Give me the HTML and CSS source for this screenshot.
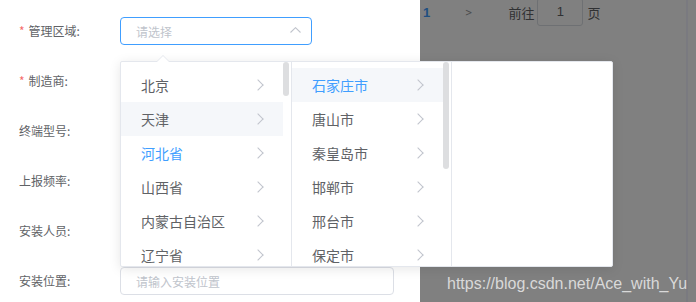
FILE: index.html
```html
<!DOCTYPE html>
<html lang="zh-CN">
<head>
  <meta charset="UTF-8" />
  <meta name="viewport" content="width=device-width, initial-scale=1.0">
  <title>终端信息</title>
  <link rel="stylesheet" href="styles.css">
</head>
<body>

  <div class="page">
    <div class="drawer">
      <div class="form">
        <div class="form-item">
          <label class="label"><span class="req">*</span>管理区域:</label>
          <div class="input is-focus">
            <span class="placeholder">请选择</span>
            <svg class="caret" width="11" height="6" viewBox="0 0 11 6">
              <polyline points="0.5,5.5 5.5,0.7 10.5,5.5" fill="none" stroke="#c0c4cc" stroke-width="1.1" />
            </svg>
          </div>
        </div>
        <div class="form-item">
          <label class="label"><span class="req">*</span>制造商:</label>
          <div class="input"></div>
        </div>
        <div class="form-item">
          <label class="label">终端型号:</label>
          <div class="input"></div>
        </div>
        <div class="form-item">
          <label class="label">上报频率:</label>
          <div class="input"></div>
        </div>
        <div class="form-item">
          <label class="label">安装人员:</label>
          <div class="input"></div>
        </div>
        <div class="form-item">
          <label class="label">安装位置:</label>
          <div class="input wide"><span class="placeholder">请输入安装位置</span></div>
        </div>
      </div>
    </div>

    <div class="mask">
      <div class="pager">
        <span class="pager-num">1</span>
        <span class="pager-next">&gt;</span>
        <span class="jump">前往</span>
        <span class="jump-box">1</span>
        <span class="jump">页</span>
      </div>
      <div class="mask-bar"></div>
    </div>
  </div>

  <!-- cascader popper, sits on top of drawer and mask -->
  <div class="cascader">
    <div class="arrow"></div>
    <div class="menu first">
      <ul class="list">
        <li class="node">北京<i class="chev"></i></li>
        <li class="node hover">天津<i class="chev"></i></li>
        <li class="node active">河北省<i class="chev"></i></li>
        <li class="node">山西省<i class="chev"></i></li>
        <li class="node">内蒙古自治区<i class="chev"></i></li>
        <li class="node">辽宁省<i class="chev"></i></li>
      </ul>
      <div class="thumb short"></div>
    </div>
    <div class="menu second">
      <ul class="list">
        <li class="node hover active">石家庄市<i class="chev"></i></li>
        <li class="node">唐山市<i class="chev"></i></li>
        <li class="node">秦皇岛市<i class="chev"></i></li>
        <li class="node">邯郸市<i class="chev"></i></li>
        <li class="node">邢台市<i class="chev"></i></li>
        <li class="node">保定市<i class="chev"></i></li>
      </ul>
      <div class="thumb long"></div>
    </div>
    <div class="menu third"></div>
  </div>

  <div class="watermark">https://blog.csdn.net/Ace_with_Yu</div>

</body>
</html>
```

FILE: styles.css
```css
body {
  margin: 0;
  padding: 0;
  width: 696px;
  height: 302px;
  overflow: hidden;
  position: relative;
  font-family: "Noto Sans CJK SC", "Noto Sans", sans-serif;
  color: #606266;
}

.page {
  display: flex;
  height: 302px;
}

.drawer {
  width: 420px;
  background-color: #fff;
}

.form {
  padding: 17px 0 0 19px;
}

.form-item {
  display: flex;
  align-items: center;
  height: 28px;
  margin-bottom: 22px;
}

.label {
  width: 101px;
  font-size: 12px;
  color: #606266;
  line-height: 28px;
}

.req {
  color: #f56c6c;
  margin-right: 4px;
}

.input {
  box-sizing: border-box;
  width: 192px;
  height: 28px;
  border: 1px solid #dcdfe6;
  border-radius: 4px;
  padding: 0 10px 0 15px;
  display: flex;
  align-items: center;
  justify-content: space-between;
}

.input.is-focus {
  border-color: #409eff;
}

.input.wide {
  width: 274px;
}

.placeholder {
  font-size: 12px;
  color: #c0c4cc;
}

.caret {
  margin-top: -2px;
}

.mask {
  flex: 1;
  display: flex;
  background-color: #808080;
}

.pager {
  flex: 1;
  display: flex;
  align-items: center;
  height: 28px;
  margin-top: -2px;
  padding-left: 3px;
  font-size: 13px;
  color: #303133;
}

.pager-num {
  font-family: "Liberation Sans", Arial, sans-serif;
  font-weight: bold;
  color: #204f80;
}

.pager-next {
  margin-left: 34px;
  font-family: "DejaVu Sans", sans-serif;
  font-size: 11px;
  color: #4a4b4d;
  transform: scaleX(0.8);
}

.jump {
  margin-left: 35px;
}

.jump-box {
  box-sizing: border-box;
  width: 46px;
  height: 28px;
  margin: 0 4px 0 3px;
  border: 1px solid #6e7073;
  border-radius: 3px;
  text-align: center;
  line-height: 26px;
  font-family: "Liberation Sans", Arial, sans-serif;
}

.jump-box + .jump {
  margin-left: 0;
}

.mask-bar {
  width: 2px;
  margin-right: 8px;
  background-color: #7a7a80;
}

.cascader {
  position: absolute;
  left: 120px;
  top: 61px;
  display: flex;
  background-color: #fff;
  border: 1px solid #e4e7ed;
  border-radius: 2px;
  box-shadow: 0 2px 12px rgba(0, 0, 0, 0.1);
}

.arrow {
  position: absolute;
  left: 36px;
  top: -7px;
  width: 0;
  height: 0;
  border-left: 6px solid transparent;
  border-right: 6px solid transparent;
  border-bottom: 6px solid #e4e7ed;
}

.arrow::after {
  content: "";
  position: absolute;
  left: -6px;
  top: 1px;
  border-left: 6px solid transparent;
  border-right: 6px solid transparent;
  border-bottom: 6px solid #fff;
}

.menu {
  position: relative;
  box-sizing: border-box;
  height: 204px;
  overflow: hidden;
  border-right: 1px solid #e4e7ed;
}

.menu.first {
  width: 171px;
}

.menu.second {
  width: 160px;
}

.menu.third {
  width: 160px;
  border-right: none;
}

.list {
  list-style: none;
  margin: 0;
  padding: 6px 8px 0 0;
}

.node {
  display: flex;
  align-items: center;
  justify-content: space-between;
  height: 34px;
  padding: 0 19px 0 20px;
  font-size: 14px;
  color: #606266;
}

.node.hover {
  background-color: #f5f7fa;
}

.node.active {
  color: #409eff;
}

.chev {
  width: 7px;
  height: 7px;
  border-top: 1px solid #c0c4cc;
  border-right: 1px solid #c0c4cc;
  transform: rotate(45deg);
  margin-right: 2px;
}

.thumb {
  position: absolute;
  right: 2px;
  top: 0;
  width: 6px;
  border-radius: 3px;
  background-color: #dddee0;
}

.thumb.short {
  height: 34px;
}

.thumb.long {
  height: 107px;
}

.watermark {
  position: absolute;
  left: 447px;
  top: 275px;
  font-family: "Liberation Sans", Arial, sans-serif;
  font-size: 16px;
  color: #d9d9d9;
  white-space: nowrap;
}
```
